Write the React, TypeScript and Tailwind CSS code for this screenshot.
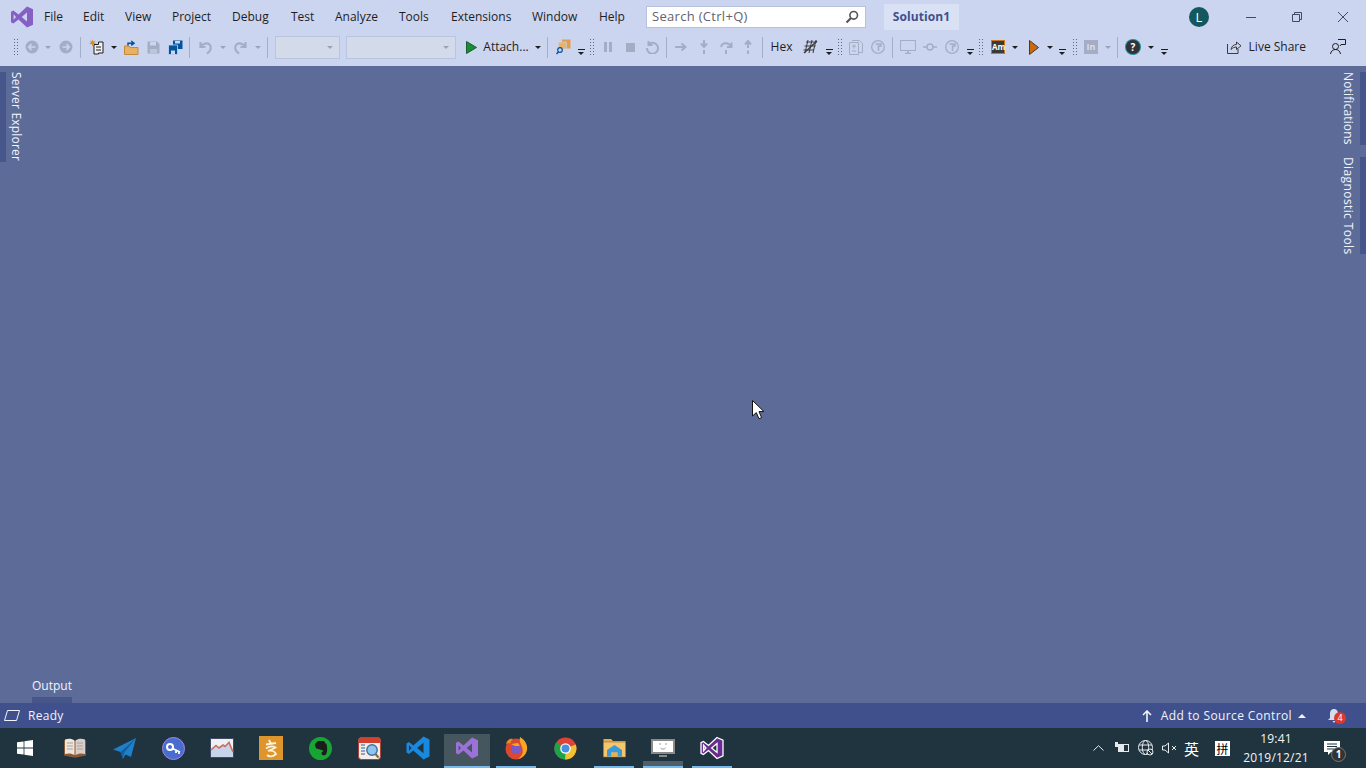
import type { ReactNode } from 'react'

const menus = [
  { label: 'File', w: 'w-[39px]' },
  { label: 'Edit', w: 'w-[42px]' },
  { label: 'View', w: 'w-[47px]' },
  { label: 'Project', w: 'w-[60px]' },
  { label: 'Debug', w: 'w-[59px]' },
  { label: 'Test', w: 'w-[44px]' },
  { label: 'Analyze', w: 'w-[64px]' },
  { label: 'Tools', w: 'w-[52px]' },
  { label: 'Extensions', w: 'w-[81px]' },
  { label: 'Window', w: 'w-[67px]' },
  { label: 'Help', w: 'w-[47px]' },
]

function Cell({ w, children }: { w: string; children?: ReactNode }) {
  return <div className={`${w} h-[22px] shrink-0 flex items-center justify-center`}>{children}</div>
}

function Sep() {
  return <div className="w-px h-[21px] shrink-0 bg-[#a3aecd]" />
}

function Grip() {
  return <div className="w-[5px] h-[19px] bg-[radial-gradient(#60697f_1px,transparent_1px)] bg-[length:3px_3px]" />
}

function Arrow({ dim }: { dim?: boolean }) {
  return <div className={`w-0 h-0 border-x-[3px] border-t-[3px] border-x-transparent ${dim ? 'border-t-[#9aa3bd]' : 'border-t-[#1e1e1e]'}`} />
}

function Overflow() {
  return (
    <div className="flex flex-col items-center gap-[2px] mt-[9px]">
      <div className="w-[7px] h-px bg-[#1e1e1e]" />
      <div className="w-0 h-0 border-x-[3.5px] border-t-[3px] border-x-transparent border-t-[#1e1e1e]" />
    </div>
  )
}

function VsLogo({ size = 24, fill = '#865fc5' }: { size?: number; fill?: string }) {
  return (
    <svg width={size} height={size} viewBox="0 0 24 24">
      <path fillRule="evenodd" fill={fill} d="M17 1.5 23 4.2V19.8L17 22.5 8.5 14.6 3.4 18.5 1 17.3V6.7L3.4 5.5 8.5 9.4ZM17 7.6 11.7 12 17 16.4ZM3.6 9.3V14.7L6 12Z" />
    </svg>
  )
}

function Circ({ dir }: { dir: 'l' | 'r' }) {
  return (
    <svg width="14" height="14" viewBox="0 0 14 14">
      <circle cx="7" cy="7" r="6.5" fill="#a5adc4" />
      <path d={dir === 'l' ? 'M10.5 7H4M6.5 4 3.8 7l2.7 3' : 'M3.5 7H10M7.5 4l2.7 3-2.7 3'} stroke="#ccd5f0" strokeWidth="1.6" fill="none" />
    </svg>
  )
}

function Floppy({ c = '#a5adc4' }: { c?: string }) {
  return (
    <svg width="13" height="13" viewBox="0 0 13 13">
      <path d="M0.5 0.5H10L12.5 3V12.5H0.5Z" fill={c} />
      <rect x="3" y="1" width="6" height="3.5" fill="#ccd5f0" />
      <rect x="3" y="8" width="7" height="4" fill="#ccd5f0" opacity="0.6" />
    </svg>
  )
}

function StepIcon({ d }: { d: string }) {
  return (
    <svg width="14" height="14" viewBox="0 0 14 14" fill="none" stroke="#a5adc4" strokeWidth="2">
      <path d={d} />
    </svg>
  )
}

function Toolbar() {
  return (
    <div className="flex items-center h-[26px] pl-[10px] text-[12px] text-[#1e1e1e]">
      <Cell w="w-[10px]"><Grip /></Cell>
      <Cell w="w-[24px]"><Circ dir="l" /></Cell>
      <Cell w="w-[8px]"><Arrow dim /></Cell>
      <Cell w="w-[28px]"><Circ dir="r" /></Cell>
      <Sep />
      <Cell w="w-[30px]">
        <svg width="15" height="16" viewBox="0 0 15 16" fill="none">
          <path d="M5 5.5H9.5V3H14V14H9.5V15H5Z" fill="#f0eff1" stroke="#1e1e1e" />
          <path d="M3.5 0 4.2 2.4 6.6 1.5 5.2 3.6 7 5 4.6 5 3.5 7.4 2.6 5 0.2 5 2 3.6 0.8 1.5 3 2.4Z" fill="#d98c24" />
          <path d="M7 8H12M7 11H12" stroke="#1e1e1e" />
        </svg>
      </Cell>
      <Cell w="w-[6px]"><Arrow /></Cell>
      <Cell w="w-[28px]">
        <svg width="15" height="15" viewBox="0 0 15 15">
          <path d="M0.5 6H5L6 7.5H14V14.5H0.5Z" fill="#e6b163" stroke="#c58a36" />
          <path d="M4 5.5V3.2H9M7.2 1 10 3.2 7.2 5.4" fill="none" stroke="#00539c" strokeWidth="1.5" />
        </svg>
      </Cell>
      <Cell w="w-[16px]"><Floppy /></Cell>
      <Cell w="w-[28px]">
        <svg width="15" height="15" viewBox="0 0 15 15">
          <path d="M5 0.5H14.5V9H5Z" fill="#00539c" />
          <rect x="7" y="1" width="5" height="2.5" fill="#ccd5f0" />
          <path d="M0.5 5H9.5V14.5H0.5Z" fill="#00539c" stroke="#ccd5f0" strokeWidth="0.8" />
          <rect x="3" y="10.5" width="4" height="3.5" fill="#ccd5f0" />
        </svg>
      </Cell>
      <Sep />
      <Cell w="w-[30px]">
        <svg width="15" height="15" viewBox="0 0 15 15" fill="none" stroke="#a5adc4" strokeWidth="2.2">
          <path d="M2.5 2V7H7.5M3 6.5C5 3.5 9 2.5 11.5 4.5 14 7 13 11 9 13.5" />
        </svg>
      </Cell>
      <Cell w="w-[6px]"><Arrow dim /></Cell>
      <Cell w="w-[28px]">
        <svg width="15" height="15" viewBox="0 0 15 15" fill="none" stroke="#a5adc4" strokeWidth="2.2">
          <path d="M12.5 2V7H7.5M12 6.5C10 3.5 6 2.5 3.5 4.5 1 7 2 11 6 13.5" />
        </svg>
      </Cell>
      <Cell w="w-[8px]"><Arrow dim /></Cell>
      <div className="w-[5px] shrink-0" />
      <Sep />
      <div className="w-[7px] shrink-0" />
      <div className="w-[65px] h-[23px] shrink-0 bg-[#d3dae9] border border-[#b9c4de] flex items-center justify-end pr-[6px]"><Arrow dim /></div>
      <div className="w-[6px] shrink-0" />
      <div className="w-[110px] h-[23px] shrink-0 bg-[#d3dae9] border border-[#b9c4de] flex items-center justify-end pr-[6px]"><Arrow dim /></div>
      <div className="w-[7px] shrink-0" />
      <Cell w="w-[16px]">
        <svg width="11" height="13" viewBox="0 0 11 13"><path d="M0.5 0.5 10.5 6.5 0.5 12.5Z" fill="#1b8a3a" stroke="#14622a" /></svg>
      </Cell>
      <div className="w-[4px] shrink-0" />
      <Cell w="w-[46px]"><span className="whitespace-nowrap">Attach...</span></Cell>
      <Cell w="w-[18px]"><Arrow /></Cell>
      <Sep />
      <Cell w="w-[30px]">
        <svg width="15" height="16" viewBox="0 0 15 16">
          <rect x="6" y="0.5" width="8.5" height="9" fill="#dd9f4d" />
          <rect x="2.5" y="3" width="8" height="7" fill="#e8b46b" stroke="#ccd5f0" strokeWidth="0.6" />
          <circle cx="4" cy="11" r="2.3" fill="#ccd5f0" stroke="#00539c" strokeWidth="1.2" />
          <path d="M2.5 12.8 0.5 15" stroke="#00539c" strokeWidth="1.5" />
        </svg>
      </Cell>
      <Cell w="w-[6px]"><Overflow /></Cell>
      <Cell w="w-[14px]"><Grip /></Cell>
      <Cell w="w-[20px]">
        <div className="flex gap-[2px]"><div className="w-[3px] h-[10px] bg-[#a5adc4]" /><div className="w-[3px] h-[10px] bg-[#a5adc4]" /></div>
      </Cell>
      <Cell w="w-[24px]"><div className="w-[9px] h-[9px] bg-[#a5adc4]" /></Cell>
      <Cell w="w-[20px]">
        <svg width="14" height="14" viewBox="0 0 14 14" fill="none" stroke="#a5adc4" strokeWidth="2"><path d="M3.5 1V5H7.5M3.5 4.5A5.5 5.5 0 1 1 2 8" /></svg>
      </Cell>
      <div className="w-[4px] shrink-0" />
      <Sep />
      <Cell w="w-[28px]"><StepIcon d="M1 7H11M7.5 3.5 11.5 7 7.5 10.5" /></Cell>
      <Cell w="w-[18px]"><StepIcon d="M7 0V6M4 3.5 7 7 10 3.5M7 10V14" /></Cell>
      <Cell w="w-[26px]"><StepIcon d="M2 7C3 2 10 2 12 6.5M12.5 2.5V7H8M7 10V14" /></Cell>
      <Cell w="w-[18px]"><StepIcon d="M7 8V2M4 4.5 7 1 10 4.5M7 10.5V14" /></Cell>
      <div className="w-[5px] shrink-0" />
      <Sep />
      <div className="w-[6px] shrink-0" />
      <Cell w="w-[25px]"><span className="whitespace-nowrap">Hex</span></Cell>
      <Cell w="w-[32px]">
        <svg width="15" height="14" viewBox="0 0 15 14" fill="none" stroke="#3b3b3b">
          <path d="M3 2H14M1.5 6H12.5M0.5 10H11M5 0 2 13M9 0 6 13M13 0 10 13" />
          <path d="M1 13 14 1" strokeWidth="1.3" />
        </svg>
      </Cell>
      <Cell w="w-[6px]"><Overflow /></Cell>
      <Cell w="w-[14px]"><Grip /></Cell>
      <Cell w="w-[20px]">
        <svg width="14" height="15" viewBox="0 0 14 15" fill="none" stroke="#a5adc4">
          <path d="M0.5 2.5H9.5V14.5H0.5ZM3 0.5H10.5L13.5 3.5V12.5H10M3 6H7M5 4.5V8.5M3 11H7" />
        </svg>
      </Cell>
      <Cell w="w-[24px]">
        <svg width="14" height="14" viewBox="0 0 14 14" fill="none" stroke="#a5adc4">
          <circle cx="7" cy="7" r="6.3" strokeWidth="1.3" />
          <path d="M4.5 4H10V6H7.5V11" strokeWidth="1.5" />
        </svg>
      </Cell>
      <div className="w-[2px] shrink-0" />
      <Sep />
      <Cell w="w-[30px]">
        <svg width="16" height="14" viewBox="0 0 16 14" fill="none" stroke="#a5adc4">
          <rect x="0.5" y="0.5" width="15" height="10" />
          <path d="M5 13.5H11M8 11V13" strokeWidth="1.5" />
        </svg>
      </Cell>
      <Cell w="w-[14px]">
        <svg width="14" height="8" viewBox="0 0 14 8" fill="none" stroke="#a5adc4" strokeWidth="1.4"><circle cx="7" cy="4" r="3" /><path d="M0 4H4M10 4H14" /></svg>
      </Cell>
      <Cell w="w-[30px]">
        <svg width="14" height="14" viewBox="0 0 14 14" fill="none" stroke="#a5adc4">
          <circle cx="7" cy="7" r="6.3" strokeWidth="1.3" />
          <path d="M4.5 4H10V6H7.5V11" strokeWidth="1.5" />
        </svg>
      </Cell>
      <Cell w="w-[6px]"><Overflow /></Cell>
      <Cell w="w-[14px]"><Grip /></Cell>
      <Cell w="w-[22px]">
        <div className="w-[14px] h-[14px] bg-[#3a3a3a] border border-[#c8791d] text-white text-[8px] font-bold leading-[12px] text-center">Am</div>
      </Cell>
      <Cell w="w-[12px]"><Arrow /></Cell>
      <Cell w="w-[26px]">
        <svg width="10" height="15" viewBox="0 0 10 15"><path d="M0.5 0.5 9.5 7.5 0.5 14.5Z" fill="#c96a0e" stroke="#3b3b3b" /></svg>
      </Cell>
      <Cell w="w-[6px]"><Arrow /></Cell>
      <Cell w="w-[18px]"><Overflow /></Cell>
      <Cell w="w-[6px]"><Grip /></Cell>
      <Cell w="w-[28px]">
        <div className="w-[14px] h-[14px] bg-[#a5adc4] text-[#d9def0] text-[9px] font-bold leading-[14px] text-center">In</div>
      </Cell>
      <Cell w="w-[6px]"><Arrow dim /></Cell>
      <div className="w-[6px] shrink-0" />
      <Sep />
      <Cell w="w-[30px]">
        <div className="w-[14px] h-[14px] rounded-full bg-[#333337] ring-1 ring-[#1a8a9a] text-white text-[10px] font-bold leading-[14px] text-center">?</div>
      </Cell>
      <Cell w="w-[6px]"><Arrow /></Cell>
      <Cell w="w-[20px]"><Overflow /></Cell>
      <div className="flex-1" />
      <div className="flex items-center gap-[7px] mr-[24px]">
        <svg width="15" height="14" viewBox="0 0 15 14" fill="none" stroke="#3b3b3b">
          <path d="M0.5 4V13.5H11V9" />
          <path d="M4 9.5C4.5 6 7 4.5 9.5 4.5V2L14 5.8 9.5 9.5V7C7.5 7 5.5 7.8 4 9.5Z" />
        </svg>
        <span className="whitespace-nowrap">Live Share</span>
      </div>
      <div className="w-[16px] h-[16px] mr-[20px]">
        <svg width="16" height="16" viewBox="0 0 16 16" fill="none" stroke="#1e1e1e">
          <path d="M8 0.5H15.5V5.5H11L10 7" />
          <circle cx="5.5" cy="7.5" r="3" />
          <path d="M0.5 15C1 12 3 10.5 5.5 10.5S10 12 10.5 15" />
        </svg>
      </div>
    </div>
  )
}

function TitleBar() {
  return (
    <div className="flex items-center h-[34px] pl-[10px] text-[12px] text-[#1e1e1e]">
      <div className="w-[24px] mr-[10px]"><VsLogo /></div>
      {menus.map(m => (
        <div key={m.label} className={`${m.w} shrink-0 whitespace-nowrap`}>{m.label}</div>
      ))}
      <div className="w-[220px] h-[22px] shrink-0 bg-white border border-[#b6c1de] flex items-center justify-between pl-[5px] pr-[6px] text-[#5f6470]">
        <span className="text-[13px] tracking-[0.3px]">Search (Ctrl+Q)</span>
        <svg width="14" height="14" viewBox="0 0 14 14" fill="none" stroke="#555">
          <circle cx="8.7" cy="5.3" r="3.8" strokeWidth="1.6" />
          <path d="M6 8 1.5 12.5" strokeWidth="2.2" />
        </svg>
      </div>
      <div className="w-[75px] h-[26px] ml-[18px] shrink-0 bg-[#d9e1f5] flex items-center justify-center font-bold tracking-[0.1px] text-[#40508d]">Solution1</div>
      <div className="ml-[230px] w-[20px] h-[20px] shrink-0 rounded-full bg-[#14585f] text-white text-[13px] leading-[20px] text-center">L</div>
      <div className="ml-[19px] flex items-center shrink-0">
        <div className="w-[46px] flex justify-center"><div className="w-[10px] h-px bg-[#3f4a63]" /></div>
        <div className="w-[46px] flex justify-center">
          <svg width="10" height="10" viewBox="0 0 10 10" fill="none" stroke="#3f4a63"><path d="M0.5 2.5H7.5V9.5H0.5ZM2.5 2.5V0.5H9.5V7.5H7.5" /></svg>
        </div>
        <div className="w-[46px] flex justify-center">
          <svg width="10" height="10" viewBox="0 0 10 10" fill="none" stroke="#3f4a63"><path d="M0 0 10 10M10 0 0 10" /></svg>
        </div>
      </div>
    </div>
  )
}

function TaskIcon({ w = 'w-[49px]', active, bar, shelf, children }: { w?: string; active?: boolean; bar?: string; shelf?: boolean; children?: ReactNode }) {
  return (
    <div className={`${w} h-full shrink-0 flex items-center justify-center pr-[3px] relative`}>
      {active && <div className="absolute left-0 w-[46px] top-[6px] bottom-0 bg-[#45565f]" />}
      {shelf && <div className="absolute left-[3px] w-[40px] bottom-[2px] h-[5px] bg-[#4e5f6b]" />}
      {bar && <div className={`absolute bottom-0 h-[2px] bg-[#76b9ed] ${bar}`} />}
      <div className="relative flex">{children}</div>
    </div>
  )
}

function TaskIcons() {
  return (
    <div className="flex h-full">
      <TaskIcon w="w-[52px]">
        <svg width="16" height="16" viewBox="0 0 16 16" fill="#fff">
          <path d="M0 2.3 6.6 1.4V7.6H0ZM7.4 1.3 16 0V7.6H7.4ZM0 8.4H6.6V14.6L0 13.7ZM7.4 8.4H16V16L7.4 14.7Z" />
        </svg>
      </TaskIcon>
      <TaskIcon>
        <svg width="24" height="22" viewBox="0 0 24 22">
          <path d="M1 18.5V3.5C5 1.5 9 2 12 4 15 2 19 1.5 23 3.5V18.5L13.5 20.5H10.5Z" fill="#8a5a35" />
          <path d="M2 17V2.5C5.5 1 9 1.5 11.5 3.5V18C9 16.5 5.5 16 2 17Z" fill="#eee6de" />
          <path d="M22 17V2.5C18.5 1 15 1.5 12.5 3.5V18C15 16.5 18.5 16 22 17Z" fill="#d9cfc8" />
          <path d="M4 6H10M4 9H10M4 12H10M14 6H20M14 9H20M14 12H20" stroke="#a9a09a" />
        </svg>
      </TaskIcon>
      <TaskIcon>
        <svg width="23" height="21" viewBox="0 0 23 21">
          <path d="M23 0 0 11.5 7.5 14 10 21 12.5 16.5 18 19Z" fill="#1f7fc9" />
          <path d="M23 0 7.5 14 10 21 11 15Z" fill="#135f9f" />
        </svg>
      </TaskIcon>
      <TaskIcon>
        <svg width="23" height="23" viewBox="0 0 23 23">
          <circle cx="11.5" cy="11.5" r="11" fill="#4a6bd0" stroke="#9d8ae0" />
          <circle cx="8" cy="10" r="3" fill="none" stroke="#fff" strokeWidth="2" />
          <path d="M10.5 11.5 18 15M14 13V16M17 14.5V17" stroke="#fff" strokeWidth="1.8" fill="none" />
        </svg>
      </TaskIcon>
      <TaskIcon>
        <svg width="24" height="20" viewBox="0 0 24 20">
          <rect x="0.5" y="0.5" width="23" height="19" fill="#eef0f6" stroke="#3f4a63" />
          <path d="M1 17V11L6 7 9 9.5 13 7 15 8 19 4 23 14V19H1Z" fill="#c8d3ec" />
          <path d="M1 12 6 7.5 9 10 13 7 15 8.5 19 4.5 23 14" fill="none" stroke="#c5715a" strokeWidth="1.6" />
        </svg>
      </TaskIcon>
      <TaskIcon>
        <div className="w-[24px] h-[24px] bg-[#dd952c] flex items-center justify-center">
          <svg width="14" height="19" viewBox="0 0 14 19" fill="none" stroke="#fdf3df" strokeWidth="1.8">
            <path d="M5 1 7 5M2 5.5 12 4M2 9.5C5 7.5 9 7 11.5 8.5 9 10 7 10.5 4 12 7 11 11 12 12 15 9 18 5 18 3 16" />
          </svg>
        </div>
      </TaskIcon>
      <TaskIcon>
        <svg width="23" height="23" viewBox="0 0 23 23">
          <circle cx="11.5" cy="11.5" r="11.5" fill="#17a534" />
          <path d="M6 7 9 4H14.5C15.5 4 16 5 16 6L17.5 7C18.5 11 18.5 15 17 17.5 15 19 12.5 18.5 12.5 16 13 14.5 14.5 14 15 14.5 13 12.5 10 12.5 9.5 12 7 12 6 10 6 7Z" fill="#1c1c1c" />
        </svg>
      </TaskIcon>
      <TaskIcon>
        <svg width="23" height="23" viewBox="0 0 23 23">
          <rect x="0.5" y="0.5" width="22" height="22" rx="3" fill="#f4ede8" stroke="#a84438" />
          <path d="M0.5 3.5A3 3 0 0 1 3.5 0.5H19.5A3 3 0 0 1 22.5 3.5V6H0.5Z" fill="#d2402f" />
          <path d="M3 8H7M3 11H7M3 14H7M3 17H7" stroke="#8aa6c4" strokeWidth="2" />
          <circle cx="14" cy="13" r="5.2" fill="#8cc6ee" stroke="#3f6f9f" strokeWidth="1.4" />
          <path d="M17.5 17 20.5 20.5" stroke="#8a6c3a" strokeWidth="2.2" />
        </svg>
      </TaskIcon>
      <TaskIcon>
        <svg width="24" height="24" viewBox="0 0 24 24">
          <path fillRule="evenodd" fill="#1a88dc" d="M17.5 0.5 23.5 3.4V20.6L17.5 23.5 7.3 14.6 3 18 0.5 16.6V7.4L3 6 7.3 9.4ZM17.5 6.7 11.2 12 17.5 17.3ZM3 9.3V14.7L5.6 12Z" />
        </svg>
      </TaskIcon>
      <TaskIcon active bar="left-0 w-[46px]">
        <VsLogo fill="#9b72d8" />
      </TaskIcon>
      <TaskIcon bar="left-[3px] w-[40px]">
        <svg width="24" height="24" viewBox="0 0 24 24">
          <circle cx="12" cy="13" r="10.5" fill="#d9482f" />
          <path d="M16 1C21 4 24 9 23 14 22 19 18 22 14 23 18 20 20 16 18 11 17 8 15 5 16 1Z" fill="#f5a623" />
          <path d="M2 8C3 4 6 2 9 3 7 4.5 6.5 6 7 7 4 7 3 8 2 8Z" fill="#f08a24" />
          <circle cx="12" cy="13" r="5" fill="#7a59c9" />
          <path d="M7 8 14 7 16 10 11 10Z" fill="#f5a623" />
        </svg>
      </TaskIcon>
      <TaskIcon>
        <svg width="23" height="23" viewBox="0 0 23 23">
          <circle cx="11.5" cy="11.5" r="11" fill="#db4437" />
          <path d="M11.5 11.5 21.7 7.5A11 11 0 0 1 11 22.5Z" fill="#f2c130" />
          <path d="M11.5 11.5 11 22.5A11 11 0 0 1 2.5 5Z" fill="#1fa349" />
          <circle cx="11.5" cy="11.5" r="5.3" fill="#fff" />
          <circle cx="11.5" cy="11.5" r="4" fill="#4a90e2" />
        </svg>
      </TaskIcon>
      <TaskIcon bar="left-[3px] w-[40px]">
        <svg width="23" height="20" viewBox="0 0 23 20">
          <path d="M0.5 1H8L10 3H22.5V19H0.5Z" fill="#e9a94f" />
          <rect x="0.5" y="4" width="22" height="15" fill="#f6c66b" stroke="#8a6d2f" strokeWidth="0.6" />
          <path d="M4 18.5V12L11.5 7 19 12V18.5H14.5V14.5H8.5V18.5Z" fill="#3a9bdc" />
          <rect x="8.5" y="14.5" width="6" height="4" fill="#e6b04f" />
        </svg>
      </TaskIcon>
      <TaskIcon shelf bar="left-[3px] w-[40px]">
        <svg width="24" height="19" viewBox="0 0 24 19">
          <rect x="1" y="1" width="22" height="13" fill="#fff" stroke="#8a8a8a" strokeWidth="2" />
          <path d="M8 16H16V18H8Z" fill="#8a8a8a" />
          <path d="M9 4V6M15 4V6M9.5 9C11 10.5 13 10.5 14.5 9" fill="none" stroke="#9a9a9a" />
        </svg>
      </TaskIcon>
      <TaskIcon bar="left-[3px] w-[40px]">
        <svg width="24" height="24" viewBox="0 0 24 24">
          <path fillRule="evenodd" fill="#6a2c91" stroke="#fff" strokeWidth="1.3" d="M17 1.5 23 4.2V19.8L17 22.5 8.5 14.6 3.4 18.5 1 17.3V6.7L3.4 5.5 8.5 9.4ZM17 7.6 11.7 12 17 16.4ZM3.6 9.3V14.7L6 12Z" />
        </svg>
      </TaskIcon>
    </div>
  )
}

function Tray() {
  return (
    <div className="flex items-center h-full text-white">
      <svg width="11" height="6" viewBox="0 0 11 6" fill="none" stroke="#e6eaee" className="mr-[11px]"><path d="M0.5 5.5 5.5 0.7 10.5 5.5" /></svg>
      <svg width="15" height="12" viewBox="0 0 15 12" fill="none" stroke="#e6eaee" className="mr-[8px]">
        <rect x="3.5" y="2.5" width="10" height="7" />
        <rect x="0" y="0" width="3" height="5" fill="#e6eaee" stroke="none" />
        <rect x="4" y="3" width="5" height="6" fill="#e6eaee" stroke="none" />
      </svg>
      <svg width="16" height="16" viewBox="0 0 16 16" fill="none" stroke="#e6eaee" className="mr-[8px]">
        <circle cx="7.5" cy="7.5" r="7" />
        <ellipse cx="7.5" cy="7.5" rx="3.2" ry="7" />
        <path d="M1 5H14M1 10H14" />
        <circle cx="12" cy="12" r="3" fill="#1f343f" />
        <path d="M10 10 14 14" />
      </svg>
      <svg width="15" height="12" viewBox="0 0 15 12" fill="none" stroke="#e6eaee" className="mr-[7px]">
        <path d="M0.5 4V8H3L6.5 11V1L3 4ZM10 4 14 8M14 4 10 8" />
      </svg>
      <span className="w-[17px] text-[15px] leading-none font-['Noto_Sans_CJK_SC',sans-serif]">英</span>
      <div className="ml-[14px] w-[15px] h-[15px] bg-white text-black text-[12px] leading-[15px] text-center font-['Noto_Sans_CJK_SC',sans-serif]">拼</div>
      <div className="w-[78px] ml-[7px] flex flex-col items-center text-[12px] tracking-[0.2px] leading-[19px] text-[#f2f4f5]">
        <span>19:41</span>
        <span>2019/12/21</span>
      </div>
      <div className="relative w-[22px] ml-[9px] mr-[20px]">
        <svg width="16" height="14" viewBox="0 0 16 14" fill="#fff">
          <path d="M0 0H16V11H7L4 14V11H0Z" />
          <path d="M3 3H13M3 5.5H13M3 8H10" stroke="#1f343f" />
        </svg>
        <div className="absolute left-[7px] top-[6px] w-[15px] h-[15px] rounded-full bg-[#333] border border-[#777] text-white text-[10px] font-bold leading-[13px] text-center">1</div>
      </div>
    </div>
  )
}

export default function App() {
  return (
    <div className="relative w-[1366px] h-[768px] overflow-hidden flex flex-col bg-[#5d6b99] font-['Open_Sans','Noto_Sans_CJK_SC',sans-serif]">
      <header className="h-[66px] shrink-0 bg-[#ccd5f0]">
        <TitleBar />
        <Toolbar />
      </header>

      <main className="flex-1 flex flex-col justify-between text-[12px] text-[#f0f3fb]">
        <div className="flex justify-between pt-[6px]">
          <div className="flex items-start gap-[4px]">
            <div className="w-[6px] h-[90px] bg-[#47568a]" />
            <span className="[writing-mode:vertical-rl] leading-[13px] h-[90px] tracking-[0.2px] whitespace-nowrap">Server Explorer</span>
          </div>
          <div className="flex flex-col gap-[12px]">
            <div className="flex gap-[5px]">
              <span className="[writing-mode:vertical-rl] leading-[13px] h-[73px] tracking-[0.15px] whitespace-nowrap">Notifications</span>
              <div className="w-[6px] h-[73px] bg-[#47568a]" />
            </div>
            <div className="flex gap-[5px]">
              <span className="[writing-mode:vertical-rl] leading-[13px] h-[97px] tracking-[0.4px] whitespace-nowrap">Diagnostic Tools</span>
              <div className="w-[6px] h-[97px] bg-[#47568a]" />
            </div>
          </div>
        </div>
        <div className="ml-[32px] w-[40px]">
          <div className="leading-[16px] mb-[3px] whitespace-nowrap">Output</div>
          <div className="h-[6px] bg-[#47568a]" />
        </div>
      </main>

      <div className="h-[25px] shrink-0 bg-[#40508d] flex items-center justify-between text-[12px] text-[#f0f3fb]">
        <div className="flex items-center">
          <svg width="16" height="11" viewBox="0 0 16 11" fill="none" stroke="#f0f3fb" className="ml-[4px] mr-[8px]"><path d="M3.5 0.5H15.5L12.5 10.5H0.5Z" /></svg>
          <span className="tracking-[0.3px]">Ready</span>
        </div>
        <div className="flex items-center">
          <svg width="10" height="12" viewBox="0 0 10 12" fill="none" stroke="#f0f3fb" strokeWidth="1.6" className="mr-[9px]"><path d="M5 12V1M1 5 5 1 9 5" /></svg>
          <span className="tracking-[0.38px]">Add to Source Control</span>
          <div className="ml-[6px] w-0 h-0 border-x-[4px] border-b-[4px] border-x-transparent border-b-[#f0f3fb]" />
          <div className="relative ml-[21px] mr-[25px] w-[14px]">
            <svg width="14" height="14" viewBox="0 0 14 14" fill="#d6dcec"><path d="M7 0C10 0 11 2.5 11 5V9L13 11H1L3 9V5C3 2.5 4 0 7 0ZM5.5 12H8.5L7 14Z" /></svg>
            <div className="absolute left-[7px] top-[3px] w-[12px] h-[12px] rounded-full bg-[#d93a2b] text-white text-[9px] leading-[12px] text-center">4</div>
          </div>
        </div>
      </div>

      <footer className="h-[40px] shrink-0 bg-[#1f343f] flex justify-between">
        <TaskIcons />
        <Tray />
      </footer>

      <svg width="13" height="20" viewBox="0 0 13 20" className="absolute left-[752px] top-[400px]">
        <path d="M0.5 0.5V16L4.3 12.6 7 18.8 9.6 17.6 7 11.6H12Z" fill="#fff" stroke="#111" />
      </svg>
    </div>
  )
}
